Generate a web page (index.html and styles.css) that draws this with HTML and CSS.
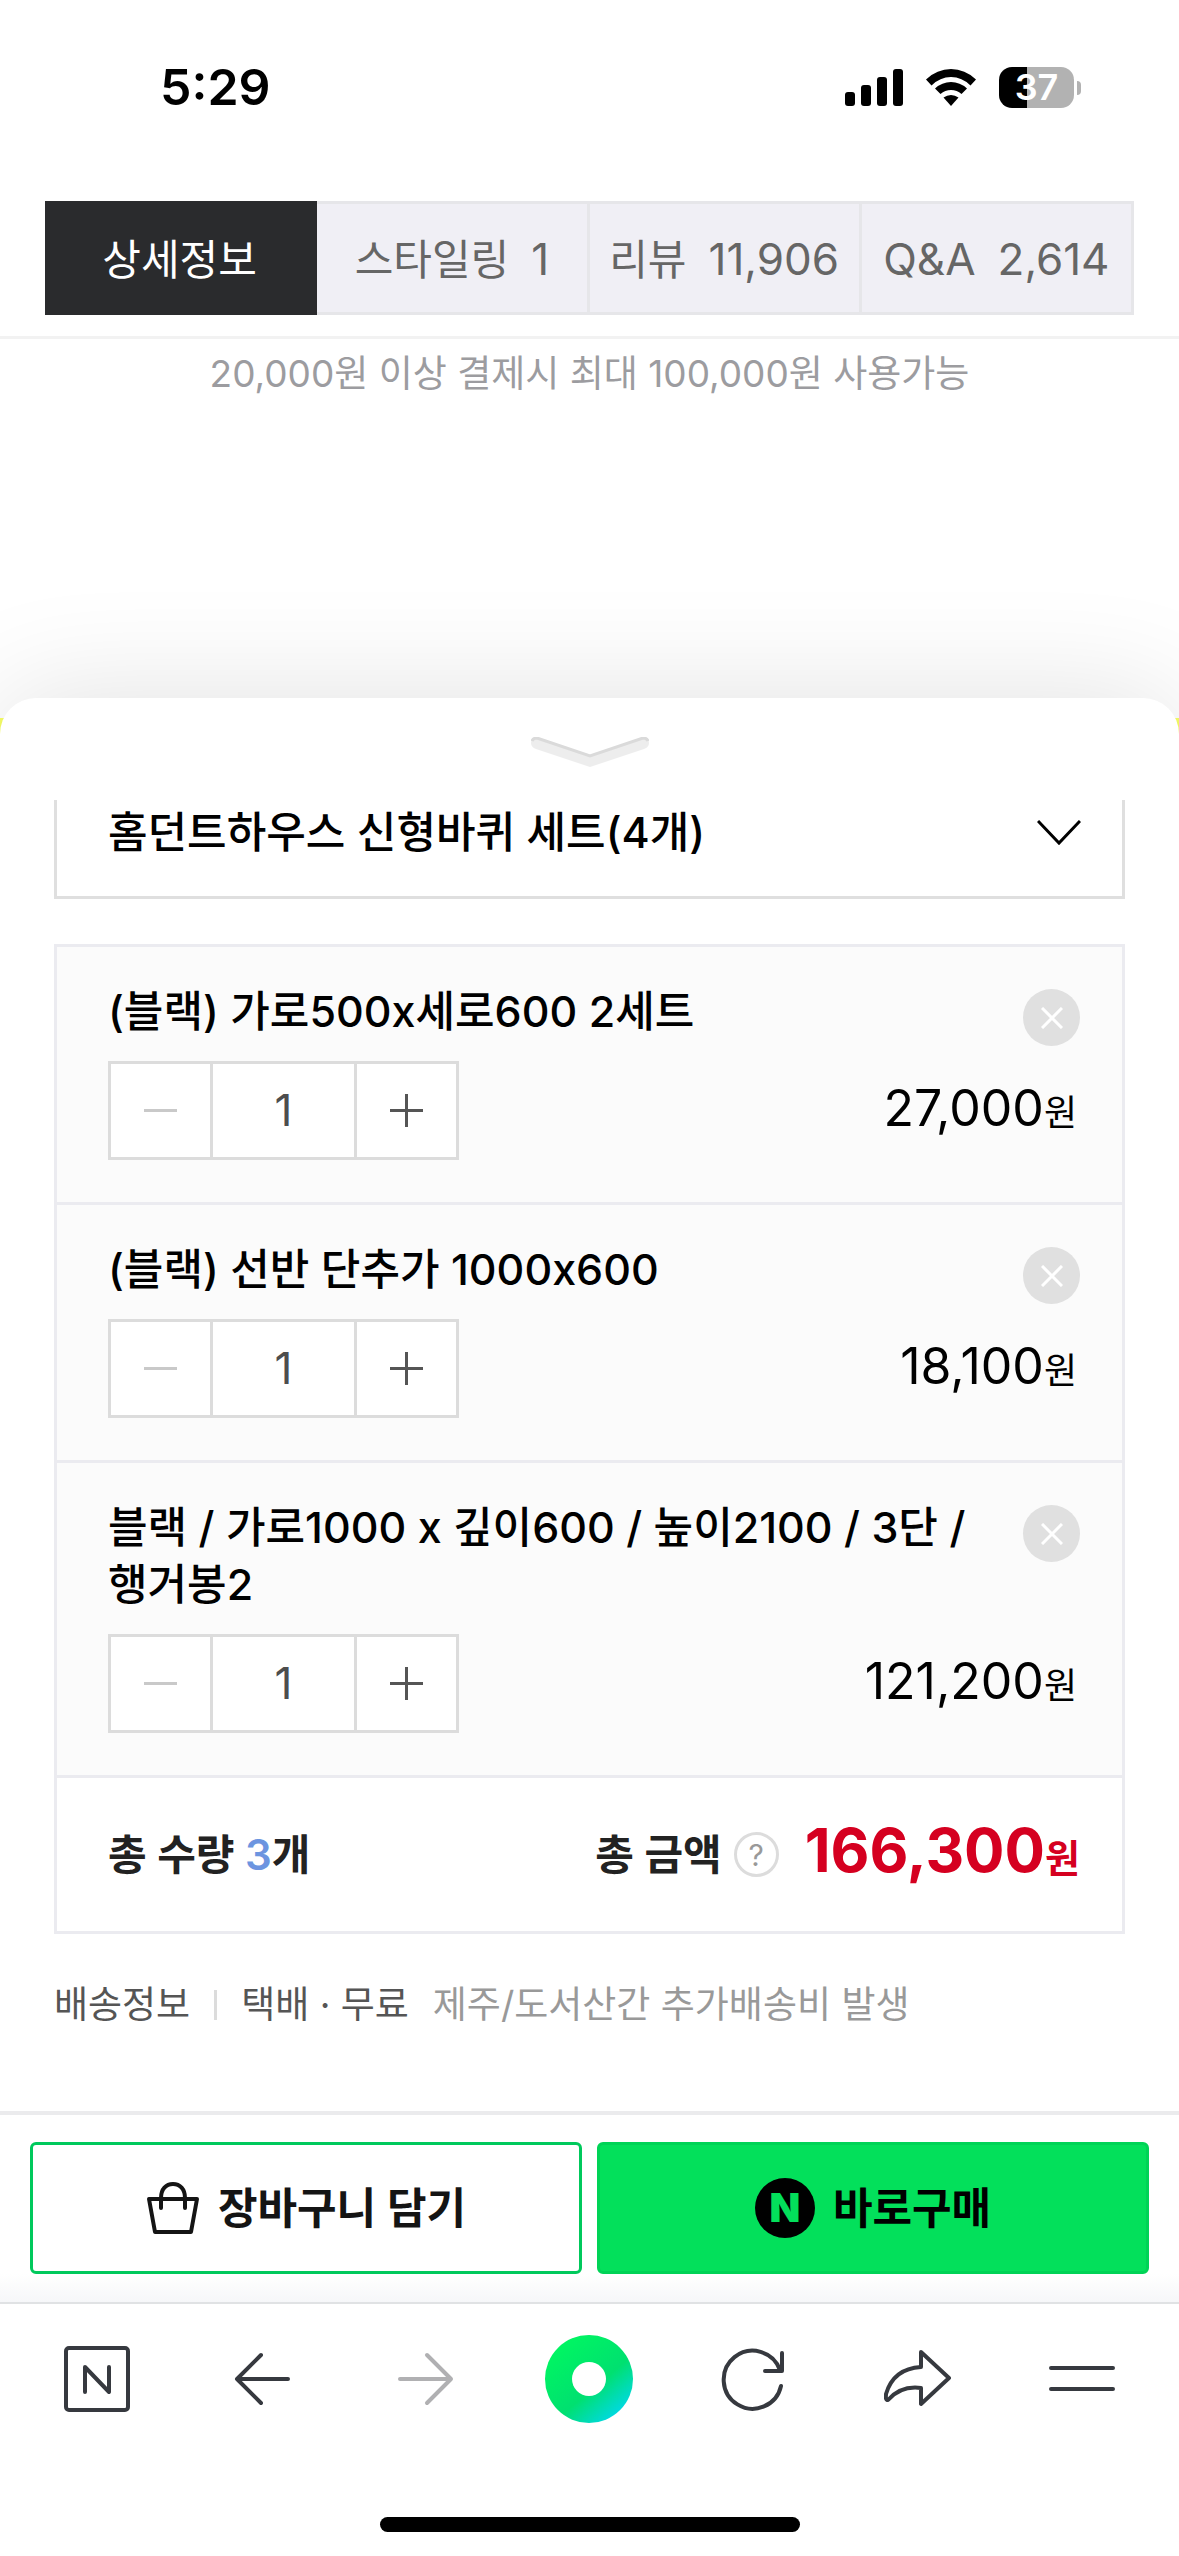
FILE: index.html
```html
<!DOCTYPE html>
<html lang="ko">
<head>
  <meta charset="UTF-8">
  <meta name="viewport" content="width=device-width, initial-scale=1.0">
  <title>구매 옵션 선택</title>
  <link rel="stylesheet" href="styles.css">
</head>
<body>
  <header class="status-bar">
    <span class="time">5:29</span>
    <div class="status-icons">
      <svg class="signal" width="58" height="38" viewBox="0 0 58 38">
        <rect x="0" y="23" width="10" height="14" rx="3"/>
        <rect x="16" y="16" width="10" height="21" rx="3"/>
        <rect x="32" y="8" width="10" height="29" rx="3"/>
        <rect x="48" y="0" width="10" height="37" rx="3"/>
      </svg>
      <svg class="wifi" width="52" height="38" viewBox="0 0 52 38">
        <path d="M1 10.500Q12 0 26 0T51 10.500L45.500 16.500Q37 8 26 8T6.500 16.500Z"/>
        <path d="M10 19.500Q17 13 26 13T42 19.500L36.500 25Q32 21 26 21T15.500 25Z"/>
        <path d="M18.500 28.500Q22 26 26 26T33.500 28.500L26 37Z"/>
      </svg>
      <div class="battery">
        <div class="battery-body">37</div>
        <div class="battery-cap"></div>
      </div>
    </div>
  </header>

  <nav class="tabs">
    <a class="tab active" href="#detail">상세정보</a>
    <a class="tab" href="#styling">스타일링 <span class="count">1</span></a>
    <a class="tab" href="#review">리뷰 <span class="count">11,906</span></a>
    <a class="tab" href="#qna"><span class="count">Q&amp;A</span> <span class="count">2,614</span></a>
  </nav>

  <main class="content">
    <p class="notice">20,000원 이상 결제시 최대 100,000원 사용가능</p>
    <div class="banner"></div>
  </main>

  <section class="sheet">
    <button class="sheet-handle" type="button" aria-label="닫기">
      <svg width="118" height="32" viewBox="0 0 118 32">
        <path d="M5 0Q0 1 0 6Q0 10 5 12L59 30L113 12Q118 10 118 6Q118 1 113 0L59 18Z" fill="#ededed"/>
        <path d="M1 4Q2 1 6 1L59 19L112 1Q116 1 117 4" fill="none" stroke="#dadada" stroke-width="3"/>
      </svg>
    </button>

    <div class="option-select">
      <select id="option" aria-label="추가상품">
        <option>홈던트하우스 신형바퀴 세트(4개)</option>
      </select>
      <svg width="44" height="26" viewBox="0 0 44 26">
        <path d="M1 1L22 23L43 1" fill="none" stroke="#000" stroke-width="3"/>
      </svg>
    </div>

    <div class="order-box">
      <ul class="items">
        <li class="item">
          <p class="item-name">(블랙) 가로500x세로600 2세트</p>
          <button class="remove" type="button" aria-label="삭제">
            <svg width="22" height="22" viewBox="0 0 22 22"><path d="M1 1L21 21M21 1L1 21"/></svg>
          </button>
          <div class="stepper">
            <button class="minus" type="button" aria-label="수량 감소"></button>
            <input type="text" value="1" aria-label="수량">
            <button class="plus" type="button" aria-label="수량 증가"></button>
          </div>
          <p class="price">27,000<span class="won">원</span></p>
        </li>
        <li class="item">
          <p class="item-name">(블랙) 선반 단추가 1000x600</p>
          <button class="remove" type="button" aria-label="삭제">
            <svg width="22" height="22" viewBox="0 0 22 22"><path d="M1 1L21 21M21 1L1 21"/></svg>
          </button>
          <div class="stepper">
            <button class="minus" type="button" aria-label="수량 감소"></button>
            <input type="text" value="1" aria-label="수량">
            <button class="plus" type="button" aria-label="수량 증가"></button>
          </div>
          <p class="price">18,100<span class="won">원</span></p>
        </li>
        <li class="item">
          <p class="item-name">블랙 / 가로1000 x 깊이600 / 높이2100 / 3단 / 행거봉2</p>
          <button class="remove" type="button" aria-label="삭제">
            <svg width="22" height="22" viewBox="0 0 22 22"><path d="M1 1L21 21M21 1L1 21"/></svg>
          </button>
          <div class="stepper">
            <button class="minus" type="button" aria-label="수량 감소"></button>
            <input type="text" value="1" aria-label="수량">
            <button class="plus" type="button" aria-label="수량 증가"></button>
          </div>
          <p class="price">121,200<span class="won">원</span></p>
        </li>
      </ul>
      <div class="total">
        <p class="total-count">총 수량 <strong>3</strong>개</p>
        <p class="total-label">총 금액</p>
        <button class="help" type="button" aria-label="도움말">?</button>
        <p class="total-price">166,300<span class="won">원</span></p>
      </div>
    </div>

    <p class="delivery">
      <span>배송정보</span>
      <span class="bar"></span>
      <span>택배 · 무료</span>
      <span class="extra">제주/도서산간 추가배송비 발생</span>
    </p>
  </section>

  <div class="buy-bar">
    <button class="btn cart" type="button">
      <svg width="54" height="54" viewBox="0 0 54 54" fill="none" stroke="#141414" stroke-width="4" stroke-linejoin="round" stroke-linecap="round">
        <path d="M3 18H51L45 51H9Z"/>
        <path d="M15 27V17C15 8 20 3 27 3S39 8 39 17V27"/>
      </svg>
      장바구니 담기
    </button>
    <button class="btn buy" type="button">
      <span class="n-mark">N</span>
      바로구매
    </button>
  </div>

  <nav class="browser-nav">
    <a href="#home" aria-label="홈">
      <svg width="66" height="66" viewBox="0 0 66 66">
        <rect x="2" y="2" width="62" height="62" rx="3"/>
        <path d="M21 46V21L45 46V21"/>
      </svg>
    </a>
    <a href="#back" aria-label="뒤로">
      <svg width="66" height="66" viewBox="0 0 66 66"><path d="M60 33H9M33 9L9 33L33 57"/></svg>
    </a>
    <a class="disabled" href="#forward" aria-label="앞으로">
      <svg width="66" height="66" viewBox="0 0 66 66"><path d="M8 33H59M35 9L59 33L35 57"/></svg>
    </a>
    <a href="#green" aria-label="그린닷"><span class="green-dot"></span></a>
    <a href="#reload" aria-label="새로고침">
      <svg width="66" height="66" viewBox="0 0 66 66">
        <path d="M60 40A29 29 0 1 1 59 24"/>
        <path d="M61 7V25H44"/>
      </svg>
    </a>
    <a href="#share" aria-label="공유">
      <svg width="68" height="66" viewBox="0 0 68 66">
        <path d="M37 6L65 32L37 58V42C22 40 12 45 4 54C1 54 2 50 2 48C7 31 19 22 37 21Z"/>
      </svg>
    </a>
    <a href="#menu" aria-label="메뉴">
      <svg width="66" height="66" viewBox="0 0 66 66"><path d="M2 22H64M2 43H64"/></svg>
    </a>
  </nav>
  <div class="home-indicator"></div>
</body>
</html>
```

FILE: styles.css
```css
* {
  box-sizing: border-box;
  margin: 0;
  padding: 0;
}

body {
  font-family: Inter, "Noto Sans CJK KR", sans-serif;
  font-size: 43px;
  line-height: 57px;
  color: #000;
  background: #fff;
  min-height: 100vh;
  display: flex;
  flex-direction: column;
}

a {
  color: inherit;
  text-decoration: none;
}

button,
input,
select {
  font: inherit;
  color: inherit;
  background: none;
  border: none;
  border-radius: 0;
  outline: none;
}

button {
  cursor: pointer;
}

svg {
  display: block;
}

/* status bar */
.status-bar {
  display: flex;
  justify-content: space-between;
  align-items: center;
  height: 201px;
  padding: 0 98px 26px 160px;
}

.time {
  font-size: 50px;
  font-weight: 600;
}

.status-icons {
  display: flex;
  align-items: center;
  gap: 22px;
}

.battery {
  display: flex;
  align-items: center;
  gap: 3px;
}

.battery-body {
  width: 75px;
  height: 41px;
  border-radius: 13px;
  background: linear-gradient(to right, #000 37%, #b2b2b2 37%);
  color: #fff;
  font-size: 36px;
  font-weight: 600;
  line-height: 41px;
  text-align: center;
}

.battery-cap {
  width: 4px;
  height: 14px;
  border-radius: 0 4px 4px 0;
  background: #b2b2b2;
}

/* tabs */
.tabs {
  display: grid;
  grid-template-columns: repeat(4, 1fr);
  padding: 0 45px 21px;
  border-bottom: 3px solid #f2f2f2;
}

.tab {
  display: flex;
  justify-content: center;
  align-items: center;
  gap: 22px;
  height: 114px;
  padding-top: 2px;
  background: #f0eff5;
  color: #666;
  border: 3px solid #e6e6e9;
  border-left: none;
  font-size: 42px;
  white-space: nowrap;
}

.tab.active {
  background: #2a2b2d;
  border-color: #2a2b2d;
  color: #fff;
}

.count {
  font-size: 44px;
}

/* page content behind the sheet */
.content {
  display: flex;
  flex-direction: column;
  height: 419px;
}

.notice {
  padding-top: 6px;
  font-size: 37px;
  color: #9c9ca0;
  text-align: center;
}

.banner {
  height: 40px;
  margin-top: auto;
  background: #f7ff66;
}

/* option sheet */
.sheet {
  position: relative;
  flex: 1;
  margin-top: -60px;
  padding: 0 54px;
  background: #fff;
  border-radius: 36px 36px 0 0;
  box-shadow: 0 0 120px rgba(0, 0, 0, 0.12);
}

.sheet-handle {
  display: flex;
  justify-content: center;
  width: 100%;
  height: 102px;
  padding-top: 39px;
}

.option-select {
  position: relative;
}

.option-select select {
  appearance: none;
  width: 100%;
  height: 99px;
  padding: 0 100px 32px 51px;
  border: 3px solid #dfdfdf;
  border-top: none;
  font-weight: 500;
}

.option-select svg {
  position: absolute;
  top: 20px;
  right: 44px;
  pointer-events: none;
}

.order-box {
  margin-top: 45px;
  border: 3px solid #ebebf0;
}

.items {
  list-style: none;
}

.item {
  display: grid;
  grid-template-columns: 1fr 57px;
  row-gap: 21px;
  padding: 36px 42px 42px 51px;
  background: #fbfbfb;
  border-bottom: 3px solid #ebebf0;
}

.item-name {
  padding-right: 30px;
  font-weight: 500;
  word-break: keep-all;
}

.remove {
  display: flex;
  justify-content: center;
  align-items: center;
  width: 57px;
  height: 57px;
  margin-top: 6px;
  margin-bottom: -6px;
  border-radius: 50%;
  background: #e0e0e0;
}

.remove svg {
  fill: none;
  stroke: #fff;
  stroke-width: 3;
}

.stepper {
  display: flex;
  justify-self: start;
  grid-row: 2;
  grid-column: 1 / 3;
  height: 99px;
  background: #fff;
  border: 3px solid #dcdcdc;
}

.stepper input {
  width: 147px;
  border: 3px solid #dcdcdc;
  border-width: 0 3px;
  color: #4d4d4d;
  font-size: 44px;
  text-align: center;
}

.stepper button {
  width: 99px;
}

.minus {
  background: linear-gradient(#c9c9c9, #c9c9c9) center / 33px 3px no-repeat;
}

.plus {
  background:
    linear-gradient(#555, #555) center / 33px 3px no-repeat,
    linear-gradient(#555, #555) center / 3px 33px no-repeat;
}

.price {
  grid-row: 2;
  grid-column: 1 / 3;
  justify-self: end;
  align-self: center;
  padding-right: 3px;
  font-size: 50px;
}

.price .won {
  font-size: 36px;
}

.total {
  display: flex;
  align-items: center;
  height: 153px;
  padding: 0 42px 0 51px;
  color: #222;
  font-size: 42px;
}

.total-count,
.total-label {
  font-weight: 600;
}

.total-count {
  margin-right: auto;
}

.total-count strong {
  font-weight: 600;
  color: #6c95e0;
}

.help {
  width: 45px;
  height: 45px;
  margin: 0 26px 0 12px;
  border: 3px solid #dcdcdc;
  border-radius: 50%;
  color: #999;
  font-size: 30px;
  line-height: 38px;
}

.total-price {
  color: #d50020;
  font-size: 60px;
  font-weight: 700;
}

.total-price .won {
  font-size: 38px;
}

.delivery {
  display: flex;
  align-items: center;
  gap: 24px;
  margin-top: 42px;
  font-size: 37px;
  color: #555;
}

.delivery .bar {
  width: 3px;
  height: 30px;
  background: #dcdcdc;
}

.delivery .extra {
  color: #999;
}

/* buy buttons */
.buy-bar {
  position: relative;
  display: grid;
  grid-template-columns: 1fr 1fr;
  gap: 15px;
  padding: 27px 30px 28px;
  background: linear-gradient(#fff 85%, #f6f7f9);
  border-top: 4px solid #ebebed;
  border-bottom: 2px solid #e0e2e4;
}

.btn {
  display: flex;
  justify-content: center;
  align-items: center;
  gap: 18px;
  height: 132px;
  border: 3px solid #00c95c;
  border-radius: 6px;
  background: #fff;
  color: #141414;
  font-weight: 600;
}

.btn.buy {
  background: #03e05b;
  border-color: #00d356;
  color: #000;
}

.n-mark {
  width: 60px;
  height: 60px;
  border-radius: 50%;
  background: #000;
  color: #03e05b;
  font-size: 40px;
  font-weight: 900;
  line-height: 60px;
  text-align: center;
}

/* browser toolbar */
.browser-nav {
  display: grid;
  grid-template-columns: repeat(7, 1fr);
  height: 213px;
  padding: 30px 15px 0;
}

.browser-nav a {
  display: flex;
  justify-content: center;
  align-items: center;
  height: 90px;
}

.browser-nav svg {
  fill: none;
  stroke: #36393f;
  stroke-width: 4;
  stroke-linecap: round;
  stroke-linejoin: round;
}

.browser-nav .disabled svg {
  stroke: #b0b0b2;
}

.green-dot {
  width: 88px;
  height: 88px;
  border: 27px solid transparent;
  border-radius: 50%;
  background:
    linear-gradient(#fff, #fff) padding-box,
    linear-gradient(140deg, #00f562 15%, #00e070 58%, #00d8f0 90%) border-box;
}

.home-indicator {
  width: 420px;
  height: 15px;
  margin: 0 auto 24px;
  border-radius: 8px;
  background: #000;
}
```
